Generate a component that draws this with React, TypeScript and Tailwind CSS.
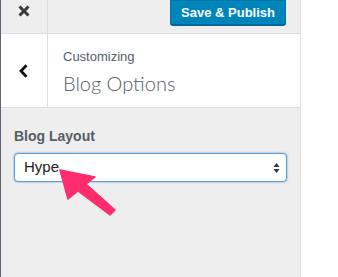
import React from 'react';

const App: React.FC = () => {
  return (
    <div className="w-[338px] h-[277px] flex bg-white overflow-hidden" style={{ fontFamily: '"Liberation Sans", Arial, sans-serif' }}>
      {/* Customizer sidebar */}
      <div className="relative w-[301px] h-full flex flex-col bg-[#eeeeee] border-l border-l-[#5d6274] border-r border-r-[#dddddd]">
        {/* Top bar */}
        <div className="h-[34px] flex border-b border-[#dddddd] shrink-0">
          <div className="w-[47px] border-r border-[#dddddd] flex justify-center pt-[5px]">
            <svg width="12" height="12" viewBox="0 0 12 12">
              <path d="M1.5 1.5 L10.5 10.5 M10.5 1.5 L1.5 10.5" stroke="#3a3a3a" strokeWidth="3" strokeLinecap="butt" />
            </svg>
          </div>
          <div className="flex-1 flex justify-end pr-[14px]">
            <button className="h-[25px] px-[10px] rounded-b-[3px] bg-[#0085ba] border border-[#0073aa] border-b-[#006799] text-white text-[13px] font-bold leading-none shadow-[0_1px_0_#006799]">
              Save &amp; Publish
            </button>
          </div>
        </div>

        {/* Section header */}
        <div className="h-[74px] flex bg-white border-b border-[#dddddd] shrink-0">
          <div className="w-[47px] border-r border-[#dddddd] flex items-center justify-center pr-[2px]">
            <svg width="9" height="14" viewBox="0 0 9 14">
              <path d="M7.5 1.2 L2 7 L7.5 12.8" stroke="#111" strokeWidth="2.8" fill="none" strokeLinejoin="miter" />
            </svg>
          </div>
          <div className="flex flex-col pl-[15px] pt-[15px]">
            <span className="text-[13px] leading-[16px] text-[#555d66]">Customizing</span>
            <span className="mt-[6px] text-[20px] leading-[24px] font-light text-[#555d66]" style={{ fontFamily: 'Lato, "Liberation Sans", sans-serif' }}>
              Blog Options
            </span>
          </div>
        </div>

        {/* Controls */}
        <div className="px-[13px] pt-[19px]">
          <label className="block text-[14px] font-bold leading-[18px] text-[#555d66]">Blog Layout</label>
          <div className="mt-[8px] h-[29px] flex items-center justify-between bg-white border border-[#5b9dd9] rounded-[4px] shadow-[0_0_2px_rgba(30,140,190,0.8)] pl-[9px] pr-[6px]">
            <span className="text-[15px] text-[#222222]">Hype</span>
            <svg width="7" height="12" viewBox="0 0 7 12">
              <path d="M3.5 1 L6.5 5 L0.5 5 Z M3.5 11 L6.5 7 L0.5 7 Z" fill="#333" />
            </svg>
          </div>
        </div>

        {/* Annotation arrow */}
        <svg className="absolute left-0 top-0 pointer-events-none" width="300" height="277" viewBox="0 0 300 277">
          <path
            d="M59 170 L94 177 L85 184 L114 210 L109 215 L77 191 L67 199 Z"
            fill="#ff2c6d"
            stroke="#ff2c6d"
            strokeWidth="1.5"
            strokeLinejoin="round"
          />
        </svg>
      </div>
    </div>
  );
};

export default App;
